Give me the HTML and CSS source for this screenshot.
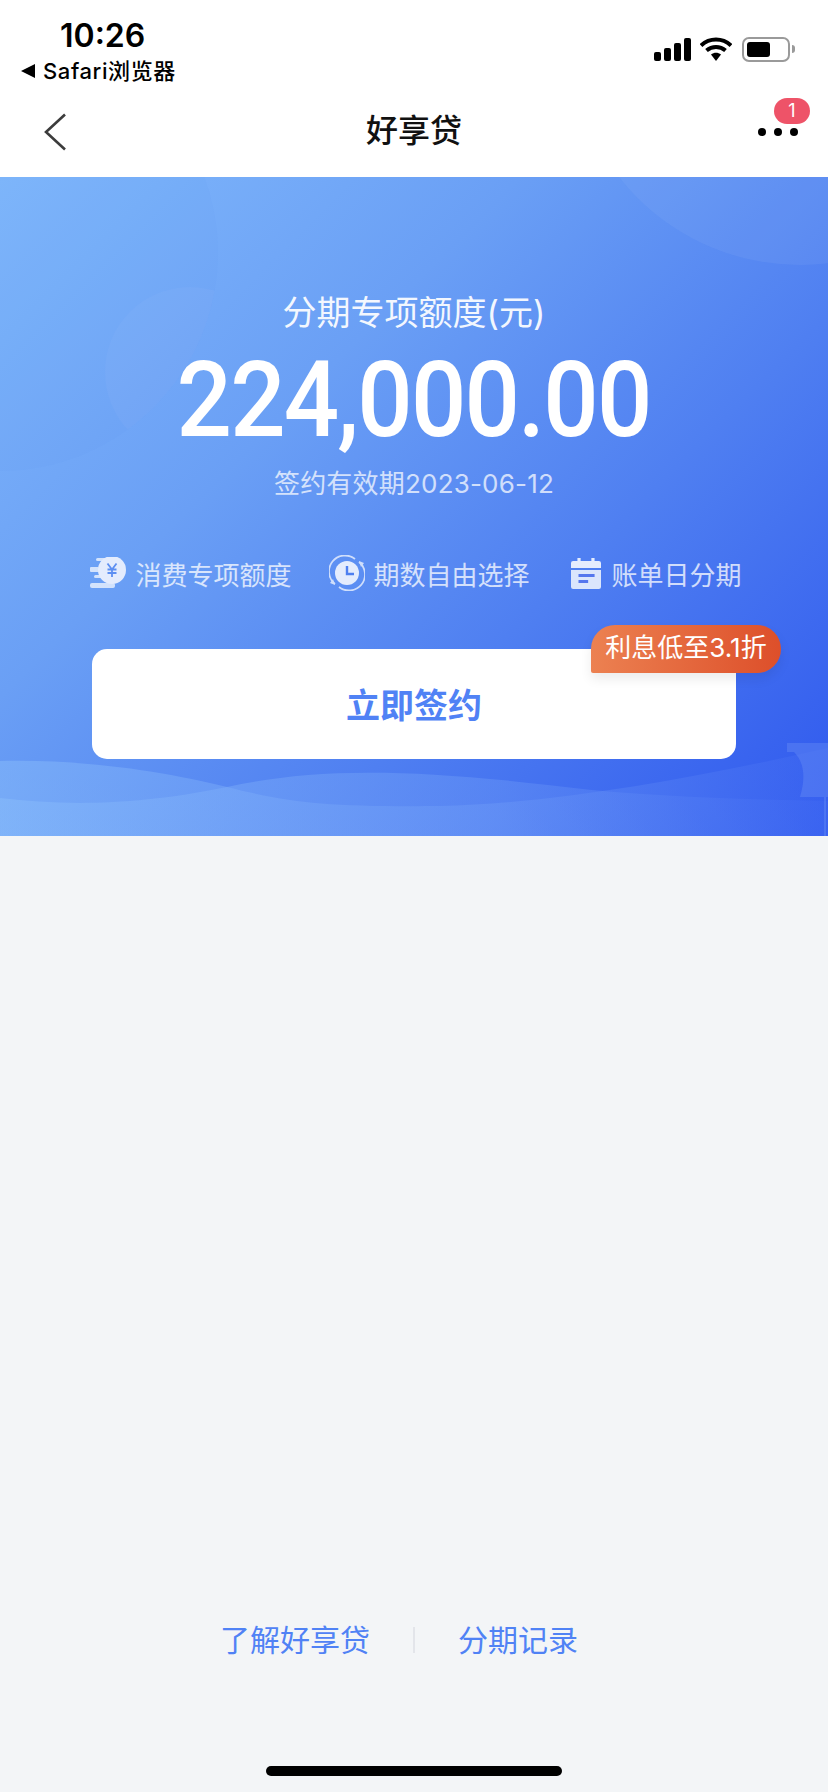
FILE: index.html
```html
<!DOCTYPE html>
<html lang="zh-CN">
<head>
    <meta charset="UTF-8">
    <meta name="viewport" content="width=device-width, initial-scale=1.0">
    <title>好享贷</title>
    <link rel="stylesheet" href="styles.css">
</head>
<body>
    <div class="page">
        <header class="top">
            <div class="status">
                <div class="status-left">
                    <div class="time">10:26</div>
                    <div class="back-app"><span class="back-arrow"></span>Safari浏览器</div>
                </div>
                <div class="status-right">
                    <svg class="signal" width="37" height="23" viewBox="0 0 37 23">
                        <rect x="0" y="14" width="7" height="9" rx="2"/>
                        <rect x="10" y="10" width="7" height="13" rx="2"/>
                        <rect x="20" y="5" width="7" height="18" rx="2"/>
                        <rect x="30" y="0" width="7" height="23" rx="2"/>
                    </svg>
                    <svg class="wifi" width="32" height="24" viewBox="0 0 32 24">
                        <path d="M1 8.500C9.500 .5 22.500 .5 31 8.500" fill="none" stroke="#000" stroke-width="4"/>
                        <path d="M6.500 13.500C12 8.800 20 8.800 25.500 13.500" fill="none" stroke="#000" stroke-width="4"/>
                        <path d="M11 17.500C14 15 18 15 21 17.500L16 24Z"/>
                    </svg>
                    <div class="battery"><div class="battery-fill"></div></div>
                    <div class="battery-cap"></div>
                </div>
            </div>
            <nav class="navbar">
                <svg class="chevron" width="22" height="38" viewBox="0 0 22 38">
                    <path d="M21 1.500L2 19L21 36.500" fill="none" stroke="#3c3c3c" stroke-width="2.600"/>
                </svg>
                <h1>好享贷</h1>
                <div class="more">
                    <span class="dot"></span><span class="dot"></span><span class="dot"></span>
                    <span class="badge">1</span>
                </div>
            </nav>
        </header>

        <section class="hero">
            <svg class="hero-bg" width="828" height="659" viewBox="0 0 828 659">
                <defs>
                    <clipPath id="bigCircle"><circle cx="0" cy="76" r="218"/></clipPath>
                    <linearGradient id="waveFade" x1="0" y1="0" x2="1" y2="0">
                        <stop offset="0" stop-color="#8cc0fb" stop-opacity="0.45"/>
                        <stop offset="0.6" stop-color="#6f9cf7" stop-opacity="0.4"/>
                        <stop offset="1" stop-color="#4069f2" stop-opacity="0.4"/>
                    </linearGradient>
                </defs>
                <circle cx="0" cy="76" r="218" fill="#4f82ee" fill-opacity="0.05"/>
                <circle cx="190" cy="195" r="85" fill="#b4cdfb" fill-opacity="0.07" clip-path="url(#bigCircle)"/>
                <circle cx="800" cy="-142" r="230" fill="#a8c4fa" fill-opacity="0.1"/>
                <path d="M0 584C90 582 170 596 227 610C290 626 330 630 440 629C560 626 700 600 828 571V659H0Z" fill="url(#waveFade)"/>
                <path d="M0 621C60 628 130 630 227 610C310 592 400 590 565 610C650 620 740 622 828 624V659H0Z" fill="url(#waveFade)"/>
                <path d="M787 566H828V620H800C806 600 804 585 794 575H787Z" fill="#6a8ff6" fill-opacity="0.4"/>
                <rect x="824" y="620" width="2" height="39" fill="#6a8ff6" fill-opacity="0.4"/>
            </svg>
            <div class="hero-body">
                <div class="limit-label">分期专项额度(元)</div>
                <div class="limit-amount">224,000.00</div>
                <div class="limit-date">签约有效期2023-06-12</div>

                <div class="features">
                    <div class="feature">
                        <svg width="38" height="32" viewBox="0 0 38 32">
                            <g fill="#fff" fill-opacity="0.7">
                                <rect x="7" y="1" width="12" height="3" rx="1.500"/>
                                <rect x="1" y="10" width="9" height="5" rx="1"/>
                                <rect x="5" y="18" width="8" height="3" rx="1.500"/>
                                <rect x="1" y="26" width="25" height="5" rx="2"/>
                            </g>
                            <circle cx="23" cy="13" r="14" fill="#e4ecfd"/>
                            <path d="M18.500 6.500L23 12.500L27.500 6.500M23 12.500V20M18.500 12.500H27.500M18.500 16H27.500" fill="none" stroke="#5d8ff2" stroke-width="1.800"/>
                        </svg>
                        <span>消费专项额度</span>
                    </div>
                    <div class="feature">
                        <svg width="36" height="36" viewBox="0 0 36 36">
                            <path d="M6 29A16 16 0 0 1 26 4M30 7A16 16 0 0 1 10 32" fill="none" stroke="#cfdefb" stroke-width="1.800"/>
                            <path d="M4 24L6 30L1 28ZM32 12L30 6L35 8Z" fill="#cfdefb"/>
                            <circle cx="18" cy="18" r="12" fill="#e4ecfd"/>
                            <path d="M18 11V19H25" fill="none" stroke="#4e7ff0" stroke-width="2.400"/>
                        </svg>
                        <span>期数自由选择</span>
                    </div>
                    <div class="feature feature-last">
                        <svg width="30" height="31" viewBox="0 0 28 31" preserveAspectRatio="none">
                            <path d="M2 3H6V0H9V3H19V0H22V3H26Q28 3 28 5V10H0V5Q0 3 2 3Z" fill="#e4ecfd"/>
                            <path d="M0 12H28V29Q28 31 26 31H2Q0 31 0 29Z" fill="#dbe6fc"/>
                            <rect x="7" y="16" width="15" height="3" fill="#5577ee"/>
                            <rect x="7" y="22" width="9" height="3" fill="#5577ee"/>
                        </svg>
                        <span>账单日分期</span>
                    </div>
                </div>

                <div class="sign-wrap">
                    <button class="sign-btn" type="button">立即签约</button>
                    <div class="sign-tag">利息低至3.1折</div>
                </div>
            </div>
        </section>

        <main class="content">
            <div class="links">
                <a href="#">了解好享贷</a>
                <span class="divider"></span>
                <a href="#">分期记录</a>
            </div>
            <div class="home-bar"></div>
        </main>
    </div>
</body>
</html>
```

FILE: styles.css
```css
* {
    box-sizing: border-box;
}
body {
    margin: 0;
    background-color: #f3f5f7;
    font-family: "Inter", "Noto Sans CJK SC", sans-serif;
}
.page {
    width: 828px;
    height: 1792px;
    display: flex;
    flex-direction: column;
    overflow: hidden;
}
.top {
    height: 177px;
    background: #fff;
    flex-shrink: 0;
}
.status {
    height: 90px;
    display: flex;
    justify-content: space-between;
}
.status-left {
    padding: 17px 0 0 21px;
}
.time {
    padding-left: 39px;
    font-size: 32px;
    line-height: 38px;
    font-weight: 600;
    color: #000;
}
.back-app {
    display: flex;
    align-items: center;
    margin-top: 2px;
    font-size: 22px;
    line-height: 28px;
    font-weight: 500;
    letter-spacing: 0.6px;
    color: #000;
}
.back-arrow {
    width: 0;
    height: 0;
    margin-right: 8px;
    border-top: 7px solid transparent;
    border-bottom: 7px solid transparent;
    border-right: 14px solid #000;
}
.status-right {
    display: flex;
    align-items: flex-start;
    padding: 37px 33px 0 0;
}
.signal {
    margin: 1px 9px 0 0;
}
.wifi {
    margin-right: 10px;
}
.battery {
    width: 48px;
    height: 25px;
    padding: 3px;
    border: 2px solid #9a9a9a;
    border-radius: 7px;
}
.battery-fill {
    width: 23px;
    height: 15px;
    background: #000;
    border-radius: 3px;
}
.battery-cap {
    width: 3px;
    height: 8px;
    margin: 8px 0 0 2px;
    background: #9a9a9a;
    border-radius: 0 3px 3px 0;
}
.navbar {
    position: relative;
    height: 87px;
    display: flex;
    align-items: center;
    justify-content: center;
}
.chevron {
    position: absolute;
    left: 44px;
    top: 23px;
}
.navbar h1 {
    margin: 0;
    font-size: 32px;
    line-height: 44px;
    font-weight: 500;
    color: #111;
    position: relative;
    top: -3px;
}
.more {
    position: absolute;
    left: 758px;
    top: 38px;
    display: flex;
    gap: 8px;
}
.dot {
    width: 8px;
    height: 8px;
    border-radius: 50%;
    background: #000;
}
.badge {
    position: absolute;
    left: 16px;
    top: -30px;
    width: 36px;
    height: 26px;
    border-radius: 13px;
    background: #ee5368;
    color: #fff;
    font-size: 18px;
    line-height: 26px;
    text-align: center;
}
.hero {
    position: relative;
    height: 659px;
    flex-shrink: 0;
    background: linear-gradient(135deg, #80b8fb 0%, #6a9ff5 35%, #4f7ff1 65%, #2f58ee 100%);
    overflow: hidden;
}
.hero-bg {
    position: absolute;
    left: 0;
    top: 0;
}
.hero-body {
    position: relative;
    display: flex;
    flex-direction: column;
    align-items: center;
    padding-top: 115px;
    color: #fff;
}
.limit-label {
    font-size: 34px;
    line-height: 42px;
    opacity: 0.92;
}
.limit-amount {
    margin-top: 8px;
    font-family: "Roboto", sans-serif;
    font-size: 106px;
    line-height: 116px;
    font-weight: 500;
    letter-spacing: -2px;
    transform: scaleX(0.92);
    white-space: nowrap;
}
.limit-date {
    margin-top: 8px;
    font-size: 26px;
    line-height: 36px;
    letter-spacing: 0.2px;
    opacity: 0.72;
}
.features {
    display: flex;
    align-items: center;
    justify-content: center;
    gap: 38px;
    margin-top: 51px;
    padding-left: 3px;
    height: 40px;
}
.feature {
    display: flex;
    align-items: center;
    gap: 8px;
    font-size: 26px;
    color: #fff;
}
.feature-last {
    gap: 11px;
    margin-left: 3px;
}
.feature span {
    opacity: 0.75;
}
.sign-wrap {
    position: relative;
    margin-top: 56px;
}
.sign-btn {
    display: block;
    width: 644px;
    height: 110px;
    padding: 0 0 2px;
    border: none;
    border-radius: 15px;
    background: #fff;
    color: #5082f5;
    font-family: inherit;
    font-size: 34px;
    font-weight: 700;
    cursor: pointer;
}
.sign-tag {
    position: absolute;
    left: 499px;
    top: -24px;
    width: 190px;
    height: 48px;
    border-radius: 24px 24px 24px 2px;
    background: linear-gradient(90deg, #ec8151, #dd4f2a);
    box-shadow: 0 6px 12px rgba(0, 0, 0, 0.08);
    color: #fff;
    font-size: 26px;
    line-height: 46px;
    text-align: center;
    white-space: nowrap;
}
.content {
    flex: 1;
    display: flex;
    flex-direction: column;
    align-items: center;
    justify-content: flex-end;
    background: #f3f5f7;
    padding-bottom: 16px;
}
.links {
    display: flex;
    align-items: center;
    justify-content: center;
    margin-bottom: 106px;
    padding-right: 30px;
}
.links a {
    color: #5082f5;
    font-size: 30px;
    line-height: 40px;
    text-decoration: none;
}
.divider {
    width: 2px;
    height: 26px;
    margin: 0 43px;
    background: #e3e5ea;
}
.home-bar {
    width: 296px;
    height: 10px;
    border-radius: 5px;
    background: #000;
}
```
